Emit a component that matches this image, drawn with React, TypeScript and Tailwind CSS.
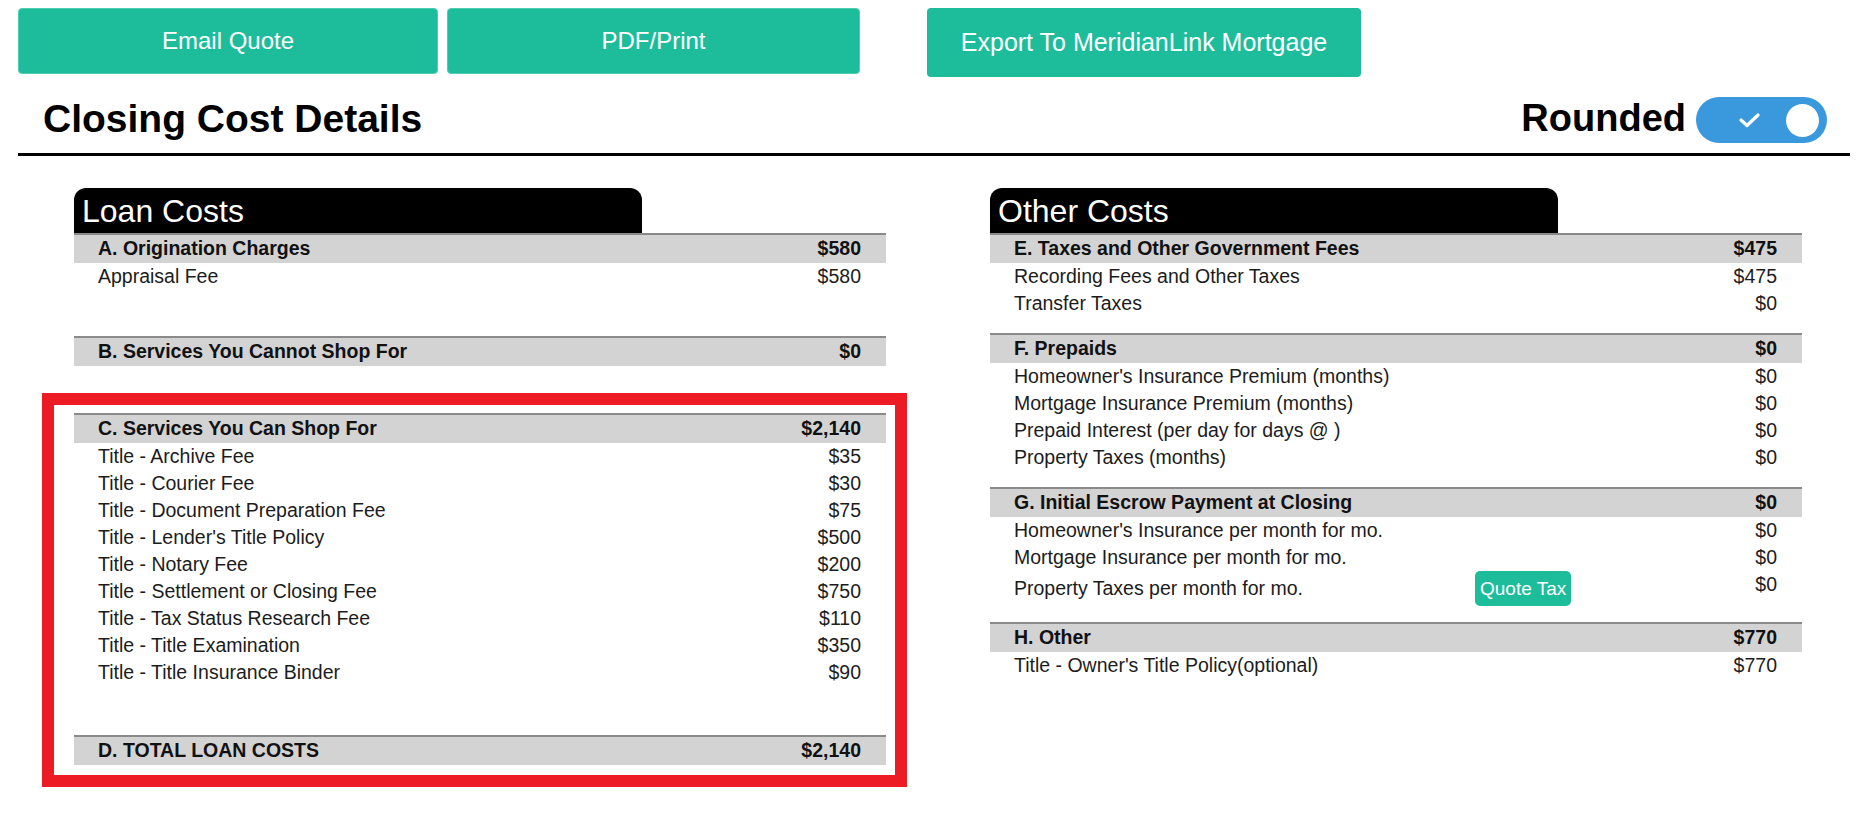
const loanShop = [
  ["Title - Archive Fee", "$35"],
  ["Title - Courier Fee", "$30"],
  ["Title - Document Preparation Fee", "$75"],
  ["Title - Lender's Title Policy", "$500"],
  ["Title - Notary Fee", "$200"],
  ["Title - Settlement or Closing Fee", "$750"],
  ["Title - Tax Status Research Fee", "$110"],
  ["Title - Title Examination", "$350"],
  ["Title - Title Insurance Binder", "$90"],
]

const prepaids = [
  ["Homeowner's Insurance Premium (months)", "$0"],
  ["Mortgage Insurance Premium (months)", "$0"],
  ["Prepaid Interest (per day for days @ )", "$0"],
  ["Property Taxes (months)", "$0"],
]

function Tab({ title }: { title: string }) {
  return (
    <div className="flex h-[45px] w-[568px] items-center rounded-t-[12px] bg-black pl-[8px] text-[32px] leading-none text-white">
      {title}
    </div>
  )
}

function SectionHeader({ label, amount }: { label: string; amount: string }) {
  return (
    <div className="flex h-[30px] items-center justify-between border-t-2 border-[#8a8a8a] bg-[#d3d3d3] pl-[24px] pr-[25px] text-[19.5px] font-bold leading-none text-[#111]">
      <span>{label}</span>
      <span>{amount}</span>
    </div>
  )
}

function Row({ label, amount }: { label: string; amount: string }) {
  return (
    <div className="flex h-[27px] items-center justify-between pl-[24px] pr-[25px] text-[19.5px] leading-none text-[#1c1c1c]">
      <span>{label}</span>
      <span>{amount}</span>
    </div>
  )
}

export default function App() {
  return (
    <div className="min-h-screen bg-white pl-[18px] pr-[25px] pt-[8px] font-['Liberation_Sans',Arial,sans-serif]">
      {/* action buttons */}
      <div className="flex items-start">
        <button className="h-[66px] w-[420px] rounded-[4px] border border-[#4fcdb0] bg-[#1dbd9c] text-[24px] text-white">
          Email Quote
        </button>
        <button className="ml-[9px] h-[66px] w-[413px] rounded-[4px] border border-[#4fcdb0] bg-[#1dbd9c] text-[24px] text-white">
          PDF/Print
        </button>
        <button className="ml-[67px] h-[69px] w-[434px] rounded-[4px] bg-[#1dbd9c] text-[25px] text-white">
          Export To MeridianLink Mortgage
        </button>
      </div>

      <div className="mt-[20px] flex h-[46px] items-center justify-between pl-[25px] pr-[23px]">
        <h1 className="mb-[4px] text-[39px] font-bold leading-none text-black">Closing Cost Details</h1>
        <div className="flex items-center gap-[10px]">
          <span className="mb-[4px] text-[38px] font-bold leading-none text-black">Rounded</span>
          <div className="relative h-[46px] w-[131px] rounded-full bg-[#3a98dc]">
            <svg className="absolute left-[41px] top-[14px]" width="26" height="18" viewBox="0 0 26 18">
              <polyline points="4,9 10,14.5 21,4" fill="none" stroke="white" strokeWidth="3.2" strokeLinecap="round" strokeLinejoin="round" />
            </svg>
            <div className="absolute right-[8px] top-[6.5px] h-[33px] w-[33px] rounded-full bg-white" />
          </div>
        </div>
      </div>
      <div className="mt-[10px] h-[3px] bg-black" />

      <div className="mt-[32px] flex gap-[104px] pl-[56px]">
        {/* loan costs */}
        <div className="w-[812px]">
          <Tab title="Loan Costs" />
          <SectionHeader label="A. Origination Charges" amount="$580" />
          <Row label="Appraisal Fee" amount="$580" />
          <div className="h-[46px]" />
          <SectionHeader label="B. Services You Cannot Shop For" amount="$0" />
          <div className="-ml-[32px] -mr-[21px] mt-[27px] border-[12px] border-[#ed1c24] pb-[10px] pl-[20px] pr-[9px] pt-[8px]">
            <SectionHeader label="C. Services You Can Shop For" amount="$2,140" />
            {loanShop.map(([label, amount]) => (
              <Row key={label} label={label} amount={amount} />
            ))}
            <div className="h-[49px]" />
            <SectionHeader label="D. TOTAL LOAN COSTS" amount="$2,140" />
          </div>
        </div>

        {/* other costs */}
        <div className="w-[812px]">
          <Tab title="Other Costs" />
          <SectionHeader label="E. Taxes and Other Government Fees" amount="$475" />
          <Row label="Recording Fees and Other Taxes" amount="$475" />
          <Row label="Transfer Taxes" amount="$0" />

          <div className="mt-[16px]">
            <SectionHeader label="F. Prepaids" amount="$0" />
            {prepaids.map(([label, amount]) => (
              <Row key={label} label={label} amount={amount} />
            ))}
          </div>

          <div className="mt-[16px]">
            <SectionHeader label="G. Initial Escrow Payment at Closing" amount="$0" />
            <Row label="Homeowner's Insurance per month for mo." amount="$0" />
            <Row label="Mortgage Insurance per month for mo." amount="$0" />
            <div className="flex items-start pl-[24px] pr-[25px] text-[19.5px] leading-none text-[#1c1c1c]">
              <span className="flex h-[35px] w-[461px] items-center">Property Taxes per month for mo.</span>
              <button className="h-[35px] rounded-[5px] bg-[#1dbd9c] px-[5px] text-[19px] leading-none text-white">
                Quote Tax
              </button>
              <span className="flex-1 text-right leading-[27px]">$0</span>
            </div>
          </div>

          <div className="mt-[16px]">
            <SectionHeader label="H. Other" amount="$770" />
            <Row label="Title - Owner's Title Policy(optional)" amount="$770" />
          </div>
        </div>
      </div>
    </div>
  )
}
